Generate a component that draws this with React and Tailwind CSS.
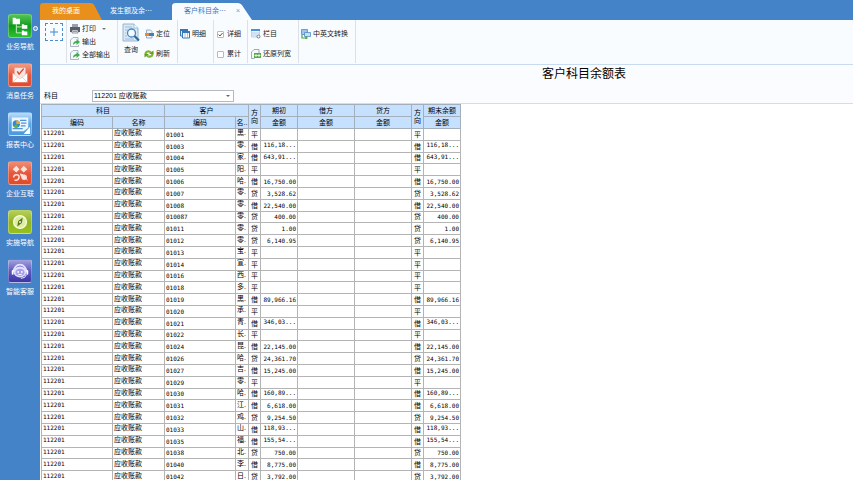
const rows = [
  ['01001', '黑', '平', ''],
  ['01003', '零', '借', '116,18...'],
  ['01004', '家', '借', '643,91...'],
  ['01005', '阳', '平', ''],
  ['01006', '哈', '借', '16,750.00'],
  ['01007', '零', '贷', '3,528.62'],
  ['01008', '零', '借', '22,540.00'],
  ['010087', '零', '贷', '400.00'],
  ['01011', '零', '贷', '1.00'],
  ['01012', '零', '贷', '6,140.95'],
  ['01013', '宝', '平', ''],
  ['01014', '宣', '平', ''],
  ['01016', '西', '平', ''],
  ['01018', '多', '平', ''],
  ['01019', '黑', '借', '89,966.16'],
  ['01020', '承', '平', ''],
  ['01021', '青', '借', '346,03...'],
  ['01022', '长', '平', ''],
  ['01024', '昆', '借', '22,145.00'],
  ['01026', '哈', '贷', '24,361.70'],
  ['01027', '吉', '借', '15,245.00'],
  ['01029', '零', '平', ''],
  ['01030', '哈', '借', '160,89...'],
  ['01031', '江', '借', '6,618.00'],
  ['01032', '鸡', '贷', '9,254.50'],
  ['01033', '山', '借', '118,93...'],
  ['01035', '福', '借', '155,54...'],
  ['01038', '北', '贷', '750.00'],
  ['01040', '李', '借', '8,775.00'],
  ['01042', '日', '贷', '3,792.00'],
]

const columns = [
  'w-[71px]', 'w-[52px]', 'w-[71px]', 'w-[13px]', 'w-[12px]',
  'w-[37px]', 'w-[57px]', 'w-[57px]', 'w-[12px]', 'w-[37px]',
]

function TreeArt() {
  return (
    <g fill="#fff">
      <path d="M4 3h3l1 1h4v6H4zM14 10h2l1 1h3v4h-6zM14 17h2l1 1h3v4h-6z" />
      <path d="M8 10v9.500h6M8 13h6" fill="none" stroke="#d5f5d0" />
    </g>
  )
}

function MailArt() {
  return (
    <g>
      <path d="M6 4h12v8l-6 4-6-4z" fill="#f6e4df" />
      <path d="M4 10l8 5 8-5v10H4z" fill="#fff" />
      <path d="M4 10l8 6 8-6M4 20l6-6M20 20l-6-6" fill="none" stroke="#e0b3a8" strokeWidth=".7" />
      <path d="M9 8l2 3 5-6" fill="none" stroke="#d9452d" strokeWidth="1.500" />
    </g>
  )
}

function ReportArt() {
  return (
    <g>
      <path d="M3 5h18v11l-5 4H3z" fill="#eaf5ff" />
      <path d="M12 8h7M13 11h6M13 14h5M4 17h11" stroke="#4d93d8" strokeWidth="1.200" />
      <circle cx="8" cy="12" r="4" fill="#2c8ad8" />
      <path d="M8 12V8a4 4 0 0 1 4 4z" fill="#f4a927" />
      <path d="M8 12l-3 3a4 4 0 0 0 5 0z" fill="#67b33a" />
      <path d="M23 15l-7 8h7z" fill="#fff" />
    </g>
  )
}

function LinkArt() {
  return (
    <g fill="#fbe3dc">
      <path d="M8 4l3.500 4L8 11.500 4 8zM16 4l4 4-4 3.500L12.500 8z" />
      <circle cx="16.500" cy="16.500" r="3" />
      <path d="M12.500 13l3 1-2 2zM20 20l-2-3" stroke="#fbe3dc" />
      <path d="M5 17c0-4 6-4 6-1s-3 4-5 4" fill="none" stroke="#fbe3dc" strokeWidth="1.600" />
    </g>
  )
}

function CompassArt() {
  return (
    <g>
      <circle cx="12" cy="12" r="7" fill="#dfeda4" stroke="#f7fbdc" strokeWidth="1.500" />
      <path d="M15 7l-1 6-5 4 1-6z" fill="#557a14" />
      <circle cx="12" cy="12" r="1" fill="#fff" />
    </g>
  )
}

function RobotArt() {
  return (
    <g>
      <path d="M5 13a7 8 0 0 1 14 0" fill="none" stroke="#e4e2ff" strokeWidth="2" />
      <ellipse cx="12" cy="13" rx="7" ry="6" fill="#e3dffd" />
      <ellipse cx="12" cy="13.500" rx="5" ry="4" fill="#a49df0" />
      <circle cx="10" cy="13" r="1" fill="#fff" />
      <circle cx="14" cy="13" r="1" fill="#fff" />
      <path d="M10 15.500q2 1 4 0" fill="none" stroke="#fff" />
      <rect x="3" y="11" width="2" height="5" rx="1" fill="#fff" />
      <rect x="19" y="11" width="2" height="5" rx="1" fill="#fff" />
      <path d="M19 16q-1 4-6 4" fill="none" stroke="#fff" />
    </g>
  )
}

const modules = [
  { label: '业务导航', art: TreeArt, color: 'from-[#4fc454] via-[#0c9a1c] to-[#2cc02f]' },
  { label: '消息任务', art: MailArt, color: 'from-[#f39a83] via-[#e4583e] to-[#e24a30]' },
  { label: '报表中心', art: ReportArt, color: 'from-[#b9dcf8] via-[#5ba5e6] to-[#4a98de]' },
  { label: '企业互联', art: LinkArt, color: 'from-[#f08d74] via-[#e4583e] to-[#e04a2c]' },
  { label: '实施导航', art: CompassArt, color: 'from-[#b5cf58] via-[#8fb422] to-[#98c01c]' },
  { label: '智能客服', art: RobotArt, color: 'from-[#a3a1dd] via-[#5e59bd] to-[#3a35a8]' },
]

function Sidebar() {
  return (
    <nav className="flex w-10 shrink-0 flex-col items-center gap-[11px] bg-[#4583c8] pt-[14px]">
      {modules.map(({ label, art: Art, color }, i) => (
        <button key={label} className="relative flex w-full flex-col items-center gap-1 text-white">
          <span className={`size-6 rounded-[3px] border border-white/30 bg-linear-to-b ${color}`}>
            <svg viewBox="0 0 24 24" className="size-full"><Art /></svg>
          </span>
          <span className="h-[10px] leading-[10px]">{label}</span>
          {i === 0 && (
            <span className="absolute top-3 right-[2px] size-[5px] rounded-full border border-white bg-[#6f9fd6]" />
          )}
        </button>
      ))}
    </nav>
  )
}

function Tab({ label, active, className, path, fill }) {
  return (
    <button className={`relative h-[17px] text-left ${className}`}>
      {path && (
        <svg viewBox="0 0 82 17" preserveAspectRatio="none" className="absolute inset-0 size-full">
          <path d={path} fill={fill} />
        </svg>
      )}
      <span className="relative">{label}</span>
      {active && <span className="relative ml-[10px] text-[#8a9aad]">×</span>}
    </button>
  )
}

function PrintIcon() {
  return (
    <svg viewBox="0 0 10 10" className="size-[10px]">
      <path d="M2 0h6v3H2z" fill="#9aa3ad" />
      <path d="M0 3h10v5H0z" fill="#596069" />
      <path d="M2 6h6v3H2z" fill="#eef1f4" stroke="#596069" strokeWidth=".6" />
      <path d="M3 7.500h4" stroke="#596069" strokeWidth=".6" />
    </svg>
  )
}

function ExportIcon() {
  return (
    <svg viewBox="0 0 10 10" className="size-[10px]">
      <path d="M.5 3l2.500-2.500h5v3M.5 3v6.500h8V8" fill="#f4f7fa" stroke="#9aa5b0" strokeWidth=".8" />
      <path d="M3 8c0-3 1.500-4 3.500-4V2L10 5 6.500 8V6C5 6 4 7 3 8z" fill="#3fae4c" />
    </svg>
  )
}

function SearchIcon() {
  return (
    <svg viewBox="0 0 18 19" className="h-[19px] w-[18px]">
      <path d="M1 1h11l4 4v13H1z" fill="#d9e9f6" stroke="#93b5d2" />
      <path d="M12 1v4h4" fill="#fff" stroke="#93b5d2" strokeWidth=".8" />
      <path d="M3 4h7M3 7h3M3 10h1M3 13h2M3 16h9" stroke="#9dbcd8" />
      <circle cx="9.500" cy="10" r="4" fill="#f4faff" stroke="#4a86be" strokeWidth="1.300" />
      <path d="M12.500 13l4.500 4.500" stroke="#2c66a3" strokeWidth="2.200" />
    </svg>
  )
}

function LocateIcon() {
  return (
    <svg viewBox="0 0 10 10" className="size-[10px]">
      <path d="M2.500 1h4l1.500 1.500v6.500h-5.500z" fill="#eef4fa" stroke="#7f9cb8" strokeWidth=".8" />
      <path d="M5 4h5v3H5z" fill="#3f7fc0" />
      <path d="M1 4h4v3H1z" fill="#e88a2e" />
    </svg>
  )
}

function RefreshIcon() {
  return (
    <svg viewBox="0 0 10 10" className="size-[10px]" fill="none" stroke="#7db82c" strokeWidth="2.200">
      <path d="M1.500 5.500C1.500 2 5 1.500 7 3.500M8.500 4.500C8.500 8 5 8.500 3 6.500" />
      <path d="M5 5h4.500V1.500zM5 5H.5v3.500z" fill="#5f9c1c" stroke="none" />
    </svg>
  )
}

function GridIcon() {
  return (
    <svg viewBox="0 0 10 10" className="size-[10px]">
      <path d="M.5 1h6v6h-6z" fill="#dbe9f7" stroke="#3a78b5" />
      <path d="M2.500 2.500h7v6.500h-7z" fill="#fff" stroke="#3a78b5" />
      <path d="M0 0h8v2H0zM2 2h8v2H2z" fill="#3a78b5" />
      <path d="M5 4v5M7.500 4v5" stroke="#7fa9d0" strokeWidth=".7" />
    </svg>
  )
}

function ColumnsIcon() {
  return (
    <svg viewBox="0 0 10 10" className="size-[10px]">
      <path d="M.5 1h8v7h-8z" fill="#eaf3fc" stroke="#a8caea" strokeWidth=".8" />
      <path d="M0 0h9v2H0z" fill="#4a90d9" />
      <path d="M1 4h7M1 6h5" stroke="#a8caea" strokeWidth=".8" />
      <circle cx="7.500" cy="7.500" r="1.500" fill="#fff" stroke="#6c7884" />
    </svg>
  )
}

function RestoreIcon() {
  return (
    <svg viewBox="0 0 10 10" className="size-[10px]">
      <path d="M.5 3L3 .5h5v4M.5 3v6.500h3" fill="#f4f7fa" stroke="#8998a8" strokeWidth=".8" />
      <path d="M3 4h7v5H3z" fill="#56a944" />
      <path d="M4 6.500h5M5.500 5L4 6.500 5.500 8M7.500 5L9 6.500 7.500 8" fill="none" stroke="#fff" strokeWidth=".8" />
    </svg>
  )
}

function TranslateIcon() {
  return (
    <svg viewBox="0 0 10 10" className="size-[10px]">
      <path d="M.5.5h6v5h-6z" fill="#9cc6ee" stroke="#4f8cc6" strokeWidth=".8" />
      <path d="M3.500 3.500h6v4h-6z" fill="#c5dff5" stroke="#4f8cc6" strokeWidth=".8" />
      <path d="M1 6v3h5M4.500 7.500L6 9l-1.500 1" fill="none" stroke="#4fa63c" strokeWidth="1.200" />
    </svg>
  )
}

function Tool({ icon: Icon, label, menu }) {
  return (
    <button className="flex h-[10px] items-center gap-[2px] leading-[10px] whitespace-nowrap">
      <Icon />
      <span>{label}</span>
      {menu && <span className="ml-1 border-x-2 border-t-2 border-x-transparent border-t-[#777]" />}
    </button>
  )
}

function Check({ label, checked }) {
  return (
    <label className="flex h-[10px] items-center gap-[3px] leading-[10px] whitespace-nowrap">
      <span className="relative flex">
        <input
          type="checkbox"
          defaultChecked={checked}
          className="peer size-[7px] appearance-none rounded-[1px] border border-[#b4b9c0] bg-white"
        />
        <svg viewBox="0 0 7 7" className="pointer-events-none absolute inset-0 hidden size-[7px] peer-checked:block">
          <path d="M1.500 3.500L3 5l2.500-3" fill="none" stroke="#555" />
        </svg>
      </span>
      <span>{label}</span>
    </label>
  )
}

function Toolbar() {
  return (
    <div className="flex h-[45px] shrink-0 items-start border-b border-[#c9dbee] bg-[#f9fcff] text-[#222] *:h-[43px] *:border-r *:border-[#dbe1e8]">
      <div className="w-[27px] shrink-0 pt-[3px] pl-[5px]">
        <button aria-label="新增" className="flex size-[18px] items-center justify-center border border-dashed border-[#4b8bcb]">
          <svg viewBox="0 0 8 8" className="size-2"><path d="M4 0v8M0 4h8" stroke="#3e87cc" /></svg>
        </button>
      </div>
      <div className="flex w-[51px] shrink-0 flex-col gap-[3px] pt-1 pl-[3px]">
        <Tool icon={PrintIcon} label="打印" menu />
        <Tool icon={ExportIcon} label="输出" />
        <Tool icon={ExportIcon} label="全部输出" />
      </div>
      <div className="flex w-[60px] shrink-0 gap-1 pt-[3px] pl-1">
        <button className="flex flex-col items-center gap-[3px]">
          <SearchIcon />
          <span className="leading-[10px]">查询</span>
        </button>
        <div className="flex flex-col gap-[10px] pt-[6px]">
          <Tool icon={LocateIcon} label="定位" />
          <Tool icon={RefreshIcon} label="刷新" />
        </div>
      </div>
      <div className="w-9 shrink-0 pt-[9px] pl-[2px]">
        <Tool icon={GridIcon} label="明细" />
      </div>
      <div className="flex w-[34px] shrink-0 flex-col gap-[10px] pt-[9px] pl-[3px]">
        <Check label="详细" checked />
        <Check label="累计" />
      </div>
      <div className="flex w-[51px] shrink-0 flex-col gap-[10px] pt-[9px] pl-[3px]">
        <Tool icon={ColumnsIcon} label="栏目" />
        <Tool icon={RestoreIcon} label="还原列宽" />
      </div>
      <div className="w-[57px] shrink-0 pt-[9px] pl-[2px]">
        <Tool icon={TranslateIcon} label="中英文转换" />
      </div>
    </div>
  )
}

function Amount({ value }) {
  const cut = value.endsWith('...')
  return (
    <td className="text-right font-['DejaVu_Sans_Mono',monospace] text-[6px]">
      <div className={cut ? 'pr-px pb-[3px]' : 'pr-px'}>{value}</div>
    </td>
  )
}

function BalanceTable() {
  return (
    <table className="h-[379px] w-[420px] table-fixed border-collapse leading-[7px] whitespace-nowrap text-black [&_td]:border [&_td]:border-[#b4b4b4] [&_td]:p-0 [&_th]:border [&_th]:border-[#a3afba] [&_th]:p-0 [&_th]:font-normal">
      <colgroup>
        {columns.map((width, i) => <col key={i} className={width} />)}
      </colgroup>
      <thead className="bg-[#c5e1ff]">
        <tr className="h-3">
          <th colSpan={2}>科目</th>
          <th colSpan={2}>客户</th>
          <th rowSpan={2} className="leading-2">方<br />向</th>
          <th>期初</th>
          <th>借方</th>
          <th>贷方</th>
          <th rowSpan={2} className="leading-2">方<br />向</th>
          <th>期末余额</th>
        </tr>
        <tr className="h-3">
          <th>编码</th>
          <th>名称</th>
          <th>编码</th>
          <th className="overflow-hidden">名..</th>
          <th>金额</th>
          <th>金额</th>
          <th>金额</th>
          <th>金额</th>
        </tr>
      </thead>
      <tbody>
        {rows.map(([code, name, direction, amount]) => (
          <tr key={code}>
            <td className="font-['DejaVu_Sans_Mono',monospace] text-[6px]"><div className="pb-[3px] pl-px">112201</div></td>
            <td><div className="pb-[3px] pl-px">应收账款</div></td>
            <td className="font-['DejaVu_Sans_Mono',monospace] text-[6px]"><div className="pl-px">{code}</div></td>
            <td className="overflow-hidden"><div className="pb-[3px] pl-px">{name}.</div></td>
            <td className="text-center">{direction}</td>
            <Amount value={amount} />
            <td />
            <td />
            <td className="text-center">{direction}</td>
            <Amount value={amount} />
          </tr>
        ))}
      </tbody>
    </table>
  )
}

export default function App() {
  return (
    <div className="flex h-screen overflow-hidden bg-white font-['Liberation_Sans','Noto_Sans_CJK_SC',sans-serif] text-[7px]">
      <Sidebar />
      <main className="flex min-w-0 flex-1 flex-col">
        <div className="flex h-5 shrink-0 items-end bg-[#4583c8] text-white">
          <Tab label="我的桌面" className="w-[62px] pl-3" fill="#e88f1c" path="M0 17V3q0-3 4-3h63q4 0 6 4l9 13z" />
          <Tab label="发生额及余⋯" className="w-[70px] pl-2" />
          <Tab label="客户科目余⋯" active className="w-[80px] pl-3 text-[#3577bb]" fill="#f9fcff" path="M0 17V3q0-3 4-3h63q4 0 6 4l9 13z" />
        </div>
        <Toolbar />
        <section className="shrink-0 border-b border-[#d8dde3] bg-[#fafcff]">
          <h1 className="pt-px pl-[275px] text-center text-[12px] leading-4 text-black">客户科目余额表</h1>
          <div className="flex items-center gap-[34px] px-1 pt-2 pb-px">
            <label htmlFor="subject">科目</label>
            <span className="relative flex">
              <select id="subject" className="h-3 w-[142px] appearance-none border border-[#b5bac0] bg-white pl-px leading-[10px]">
                <option>112201 应收账款</option>
              </select>
              <svg viewBox="0 0 4 2" className="pointer-events-none absolute top-[5px] right-1 h-[2px] w-1">
                <path d="M0 0h4L2 2z" fill="#666" />
              </svg>
            </span>
          </div>
        </section>
        <div className="pl-px"><BalanceTable /></div>
      </main>
    </div>
  )
}
